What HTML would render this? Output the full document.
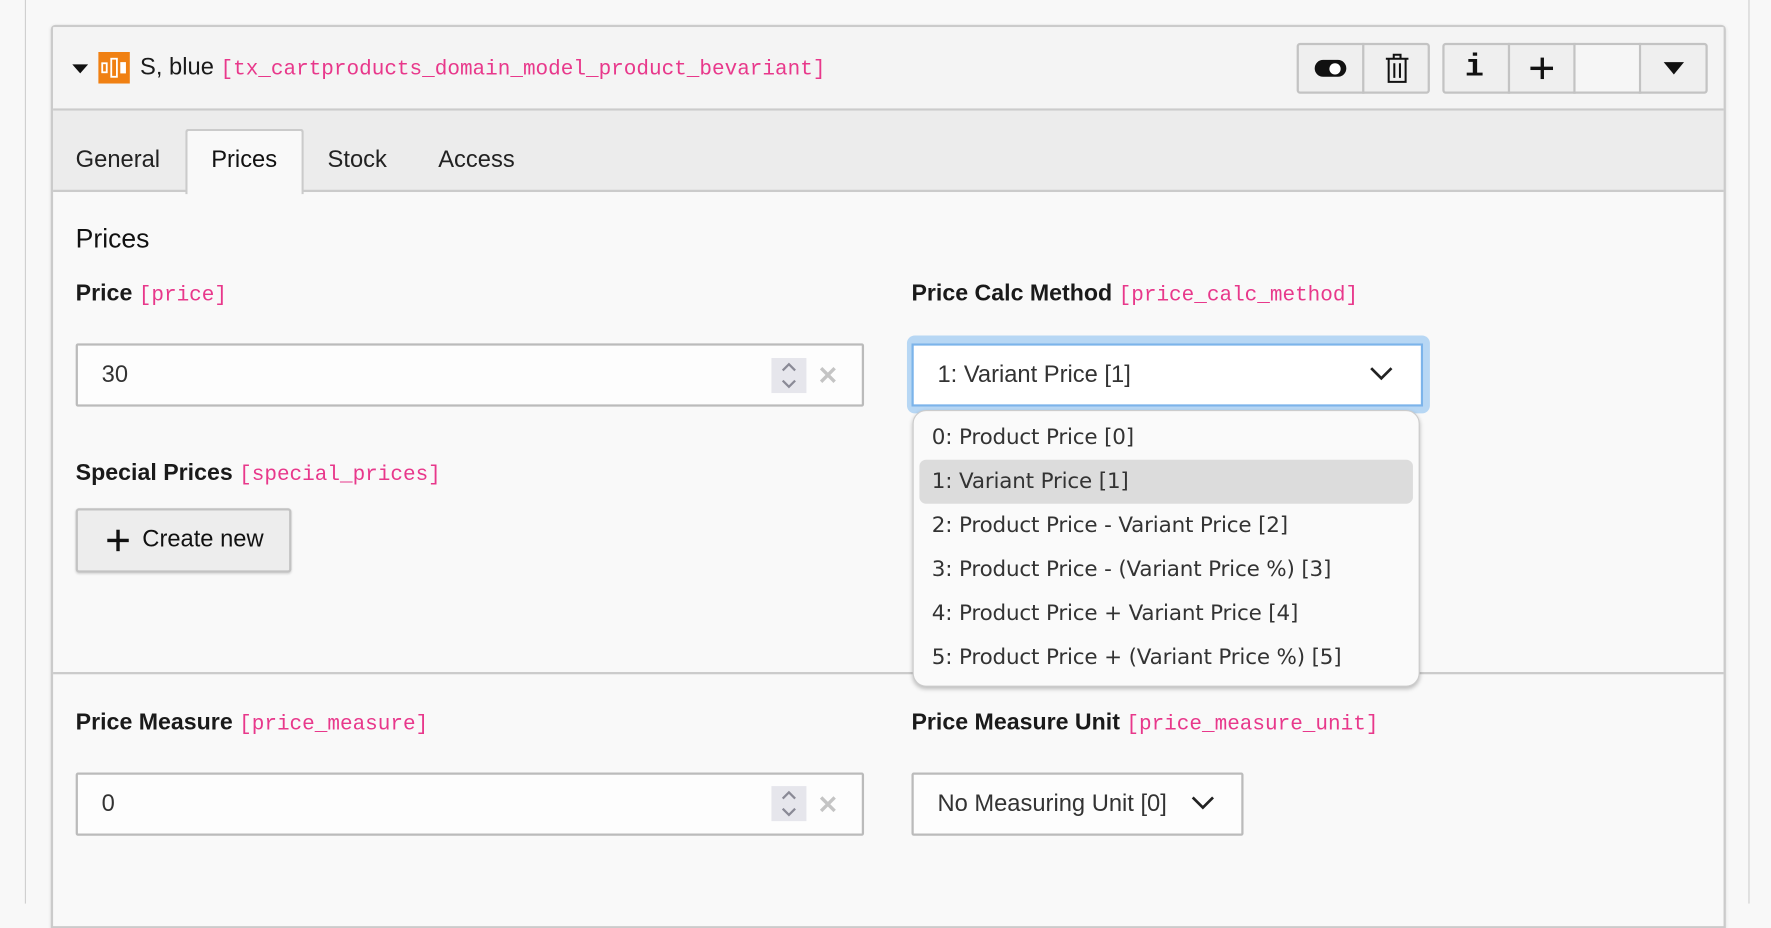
<!DOCTYPE html>
<html><head><meta charset="utf-8"><style>
*{box-sizing:border-box;margin:0;padding:0}
html,body{width:1771px;height:875px;overflow:hidden;background:#f8f8f8}
#w{position:absolute;left:0;top:0;width:1568px;height:775px;transform:scale(1.12946);transform-origin:0 0;font-family:"Liberation Sans",sans-serif;color:#1a1a1a}
.a{position:absolute}
.code{font-family:"Liberation Mono",monospace;color:#e8388b;font-size:18.6px;font-weight:normal}
.lbl{font-weight:bold;font-size:20.5px;white-space:nowrap}
.inp{background:#fdfdfd;border:2px solid #bbb;border-radius:2px}
.btn{background:#efefef;border:2px solid #c3c3c3;border-radius:3px}
.opt{position:absolute;left:16px;font-family:"DejaVu Sans","Liberation Sans",sans-serif;font-size:19px;color:#333;letter-spacing:-0.15px;white-space:nowrap}
.t{font-size:21px}
</style></head><body><div id="w">
<div class="a" style="left:22px;top:0;width:1527px;height:800px;border-left:1px solid #cfcfcf;border-right:1px solid #cfcfcf;background:#f8f8f8"></div>
<div class="a" style="left:45px;top:22px;width:1483px;height:800px;border:2px solid #cbcbcb;border-radius:4px 4px 0 0;background:#f9f9f9;box-shadow:0 1px 3px rgba(0,0,0,.1)"></div>
<div class="a" style="left:47px;top:24px;width:1479px;height:74px;background:#f4f4f4;border-bottom:2px solid #cbcbcb"></div>
<div class="a" style="left:64px;top:57px;width:0;height:0;border-left:7px solid transparent;border-right:7px solid transparent;border-top:8px solid #111"></div>
<svg class="a" style="left:87px;top:46px" width="28" height="28" viewBox="0 0 28 28"><rect width="28" height="28" fill="#f08012"/><rect x="3.5" y="10" width="4" height="8" fill="none" stroke="#fff" stroke-width="1.6"/><rect x="11.5" y="6" width="5" height="16" fill="none" stroke="#fff" stroke-width="1.6"/><rect x="19.5" y="9" width="5" height="10" fill="#fff"/></svg>
<div class="a" style="left:124px;top:48px;font-size:21px;white-space:nowrap">S, blue <span class="code">[tx_cartproducts_domain_model_product_bevariant]</span></div>
<div class="a btn" style="left:1148px;top:38px;width:118px;height:45px"></div>
<div class="a" style="left:1206px;top:38px;width:2px;height:45px;background:#c3c3c3"></div>
<div class="a" style="left:1164px;top:53px;width:28px;height:15px;border-radius:8px;background:#111"></div>
<div class="a" style="left:1177px;top:56px;width:10px;height:10px;border-radius:5px;background:#fff"></div>
<svg class="a" style="left:1226px;top:47px" width="22" height="27" viewBox="0 0 22 27" fill="none" stroke="#111" stroke-width="1.8"><path d="M1 5h20M8 5V1.5h6V5M3.5 5.5V25.5h15V5.5M8.5 9v13M13.5 9v13"/></svg>
<div class="a btn" style="left:1277px;top:38px;width:235px;height:45px"></div>
<div class="a" style="left:1335px;top:38px;width:2px;height:45px;background:#c3c3c3"></div>
<div class="a" style="left:1393px;top:38px;width:2px;height:45px;background:#c3c3c3"></div>
<div class="a" style="left:1451px;top:38px;width:2px;height:45px;background:#c3c3c3"></div>
<div class="a" style="left:1395px;top:40px;width:56px;height:41px;background:#f6f6f6"></div>
<div class="a" style="left:1297px;top:45px;font-family:'Liberation Mono',monospace;font-weight:bold;font-size:28px;color:#111">i</div>
<div class="a" style="left:1355px;top:59px;width:20px;height:3px;background:#111"></div>
<div class="a" style="left:1363.5px;top:51px;width:3px;height:19px;background:#111"></div>
<div class="a" style="left:1473px;top:55px;width:0;height:0;border-left:9px solid transparent;border-right:9px solid transparent;border-top:11px solid #111"></div>
<div class="a" style="left:47px;top:98px;width:1479px;height:72px;background:#ececec;border-bottom:2px solid #cbcbcb"></div>
<div class="a" style="left:164px;top:114px;width:105px;height:58px;background:#f9f9f9;border:2px solid #cbcbcb;border-bottom:none;border-radius:3px 3px 0 0"></div>
<div class="a t" style="left:67px;top:130px;color:#222">General</div>
<div class="a t" style="left:187px;top:130px;color:#111">Prices</div>
<div class="a t" style="left:290px;top:130px;color:#222">Stock</div>
<div class="a t" style="left:388px;top:130px;color:#222">Access</div>
<div class="a" style="left:67px;top:198px;font-size:23.5px;color:#111">Prices</div>
<div class="a lbl" style="left:67px;top:248px">Price <span class="code">[price]</span></div>
<div class="a inp" style="left:67px;top:304px;width:698px;height:56px"></div>
<div class="a t" style="left:90px;top:320px;color:#333">30</div>
<div class="a" style="left:683px;top:317px;width:31px;height:31px;background:#e6e6ec"></div>
<svg class="a" style="left:683px;top:317px" width="31" height="31" fill="none" stroke="#8a8a96" stroke-width="2"><path d="M10 11l5.5-5.5L21 11M10 20l5.5 5.5L21 20"/></svg>
<svg class="a" style="left:725px;top:324px" width="16" height="16" stroke="#c4c4c4" stroke-width="3"><path d="M2 2l12 12M14 2L2 14"/></svg>
<div class="a lbl" style="left:67px;top:407px">Special Prices <span class="code">[special_prices]</span></div>
<div class="a btn" style="left:67px;top:450px;width:191px;height:57px;background:#ededed;box-shadow:0 1px 2px rgba(0,0,0,.15)"></div>
<div class="a" style="left:95px;top:477px;width:19px;height:3px;background:#111"></div>
<div class="a" style="left:103px;top:469px;width:3px;height:19px;background:#111"></div>
<div class="a t" style="left:126px;top:466px;color:#111">Create new</div>
<div class="a lbl" style="left:807px;top:248px">Price Calc Method <span class="code">[price_calc_method]</span></div>
<div class="a" style="left:803px;top:297px;width:463px;height:69px;border-radius:7px;background:#b7d7f4"></div>
<div class="a" style="left:807px;top:304px;width:453px;height:56px;background:#fff;border:2px solid #7cb4ea"></div>
<div class="a t" style="left:830px;top:320px;color:#333">1: Variant Price [1]</div>
<svg class="a" style="left:1212px;top:324px" width="22" height="14" fill="none" stroke="#222" stroke-width="2.4"><path d="M2 2l9 9 9-9"/></svg>
<div class="a" style="left:47px;top:595px;width:1479px;height:2px;background:#cbcbcb"></div>
<div class="a" style="left:808px;top:363px;width:449px;height:245px;background:#fafafa;border:1px solid #ccc;border-radius:12px;box-shadow:0 2px 4px rgba(0,0,0,.25)">
<div class="a" style="left:5px;top:43px;width:437px;height:39px;background:#dcdcdc;border-radius:6px"></div>
<div class="opt" style="top:12px">0: Product Price [0]</div>
<div class="opt" style="top:51px">1: Variant Price [1]</div>
<div class="opt" style="top:90px">2: Product Price - Variant Price [2]</div>
<div class="opt" style="top:129px">3: Product Price - (Variant Price %) [3]</div>
<div class="opt" style="top:168px">4: Product Price + Variant Price [4]</div>
<div class="opt" style="top:207px">5: Product Price + (Variant Price %) [5]</div>
</div>
<div class="a lbl" style="left:67px;top:628px">Price Measure <span class="code">[price_measure]</span></div>
<div class="a inp" style="left:67px;top:684px;width:698px;height:56px"></div>
<div class="a t" style="left:90px;top:700px;color:#333">0</div>
<div class="a" style="left:683px;top:696px;width:31px;height:31px;background:#e6e6ec"></div>
<svg class="a" style="left:683px;top:696px" width="31" height="31" fill="none" stroke="#8a8a96" stroke-width="2"><path d="M10 11l5.5-5.5L21 11M10 20l5.5 5.5L21 20"/></svg>
<svg class="a" style="left:725px;top:704px" width="16" height="16" stroke="#c4c4c4" stroke-width="3"><path d="M2 2l12 12M14 2L2 14"/></svg>
<div class="a lbl" style="left:807px;top:628px">Price Measure Unit <span class="code">[price_measure_unit]</span></div>
<div class="a inp" style="left:807px;top:684px;width:294px;height:56px;border-color:#bbb"></div>
<div class="a t" style="left:830px;top:700px;color:#333">No Measuring Unit [0]</div>
<svg class="a" style="left:1054px;top:704px" width="22" height="14" fill="none" stroke="#222" stroke-width="2.4"><path d="M2 2l9 9 9-9"/></svg>
</div></body></html>
